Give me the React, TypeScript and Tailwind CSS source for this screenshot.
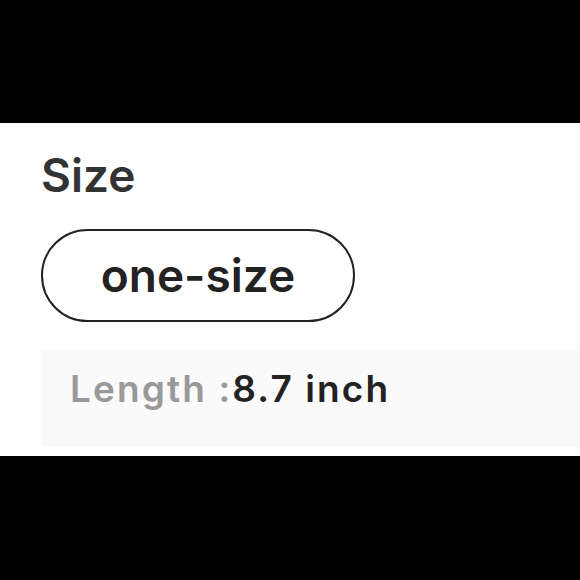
export default function App() {
   return (
      <div className="flex h-[580px] w-[580px] flex-col bg-black" style={{ fontFamily: "Inter, 'Liberation Sans', sans-serif" }}>
         <div className="h-[123px] shrink-0" />
         <div className="flex h-[333px] shrink-0 flex-col bg-white pl-[41px]">
            <h2 className="mt-[24px] h-[56px] text-[46px] leading-[56px] font-semibold text-[#333]">Size</h2>
            <div className="mt-[26px] flex h-[93px] w-[314px] items-center justify-center rounded-full border-2 border-[#222]">
               <span className="text-[46px] font-semibold text-[#222]">one-size</span>
            </div>
            <div className="mt-[28px] flex h-[97px] items-start bg-[#fafafa] pl-[29px] pt-[17px]">
               <span className="text-[37px] leading-[44px] tracking-[2.1px] font-semibold text-[#999]">Length :</span>
               <span className="text-[37px] leading-[44px] tracking-[2.1px] font-semibold text-[#222]">8.7 inch</span>
            </div>
         </div>
         <div className="flex-1" />
      </div>
   );
}
